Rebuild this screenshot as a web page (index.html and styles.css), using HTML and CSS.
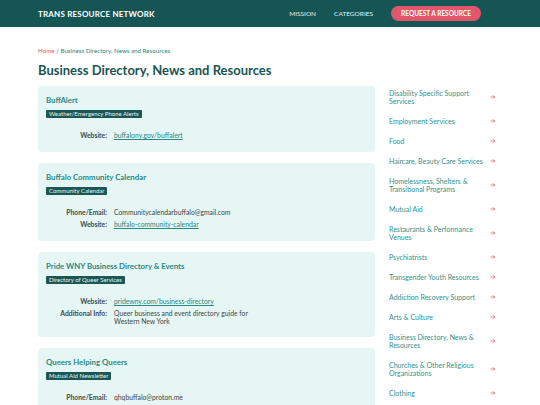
FILE: index.html
```html
<!DOCTYPE html>
<html lang="en">
<head>
    <meta charset="UTF-8">
    <meta name="viewport" content="width=device-width, initial-scale=1.0">
    <title>Business Directory, News and Resources - Trans Resource Network</title>
    <link rel="stylesheet" href="styles.css">
</head>
<body>
    <header class="topbar">
        <div class="wrap topbar-inner">
            <a class="brand" href="#">TRANS RESOURCE NETWORK</a>
            <nav class="nav">
                <a href="#">MISSION</a>
                <a href="#">CATEGORIES</a>
                <a class="nav-btn" href="#">REQUEST A RESOURCE</a>
            </nav>
        </div>
    </header>

    <div class="wrap page">
        <p class="crumbs"><a href="#">Home</a> / Business Directory, News and Resources</p>
        <h1 class="page-title">Business Directory, News and Resources</h1>

        <div class="layout">
            <main class="cards">
                <div class="card">
                    <h2 class="card-title">BuffAlert</h2>
                    <span class="badge">Weather/Emergency Phone Alerts</span>
                    <dl class="details">
                        <dt>Website:</dt>
                        <dd><a href="#">buffalony.gov/buffalert</a></dd>
                    </dl>
                </div>

                <div class="card">
                    <h2 class="card-title">Buffalo Community Calendar</h2>
                    <span class="badge">Community Calendar</span>
                    <dl class="details">
                        <dt>Phone/Email:</dt>
                        <dd>Communitycalendarbuffalo@gmail.com</dd>
                        <dt>Website:</dt>
                        <dd><a href="#">buffalo-community-calendar</a></dd>
                    </dl>
                </div>

                <div class="card">
                    <h2 class="card-title">Pride WNY Business Directory &amp; Events</h2>
                    <span class="badge">Directory of Queer Services</span>
                    <dl class="details">
                        <dt>Website:</dt>
                        <dd><a href="#">pridewny.com/business-directory</a></dd>
                        <dt>Additional Info:</dt>
                        <dd class="info">Queer business and event directory guide for Western New York</dd>
                    </dl>
                </div>

                <div class="card">
                    <h2 class="card-title">Queers Helping Queers</h2>
                    <span class="badge">Mutual Aid Newsletter</span>
                    <dl class="details">
                        <dt>Phone/Email:</dt>
                        <dd>qhqbuffalo@proton.me</dd>
                    </dl>
                </div>
            </main>

            <aside class="sidebar">
                <ul class="cat-list">
                    <li><a href="#"><span>Disability Specific Support Services</span><svg class="arrow" viewBox="0 0 10 10"><path d="M1 5h7M5 2l3 3-3 3"/></svg></a></li>
                    <li><a href="#"><span>Employment Services</span><svg class="arrow" viewBox="0 0 10 10"><path d="M1 5h7M5 2l3 3-3 3"/></svg></a></li>
                    <li><a href="#"><span>Food</span><svg class="arrow" viewBox="0 0 10 10"><path d="M1 5h7M5 2l3 3-3 3"/></svg></a></li>
                    <li><a href="#"><span>Haircare, Beauty Care Services</span><svg class="arrow" viewBox="0 0 10 10"><path d="M1 5h7M5 2l3 3-3 3"/></svg></a></li>
                    <li><a href="#"><span>Homelessness, Shelters &amp; Transitional Programs</span><svg class="arrow" viewBox="0 0 10 10"><path d="M1 5h7M5 2l3 3-3 3"/></svg></a></li>
                    <li><a href="#"><span>Mutual Aid</span><svg class="arrow" viewBox="0 0 10 10"><path d="M1 5h7M5 2l3 3-3 3"/></svg></a></li>
                    <li><a href="#"><span>Restaurants &amp; Performance Venues</span><svg class="arrow" viewBox="0 0 10 10"><path d="M1 5h7M5 2l3 3-3 3"/></svg></a></li>
                    <li><a href="#"><span>Psychiatrists</span><svg class="arrow" viewBox="0 0 10 10"><path d="M1 5h7M5 2l3 3-3 3"/></svg></a></li>
                    <li><a href="#"><span>Transgender Youth Resources</span><svg class="arrow" viewBox="0 0 10 10"><path d="M1 5h7M5 2l3 3-3 3"/></svg></a></li>
                    <li><a href="#"><span>Addiction Recovery Support</span><svg class="arrow" viewBox="0 0 10 10"><path d="M1 5h7M5 2l3 3-3 3"/></svg></a></li>
                    <li><a href="#"><span>Arts &amp; Culture</span><svg class="arrow" viewBox="0 0 10 10"><path d="M1 5h7M5 2l3 3-3 3"/></svg></a></li>
                    <li><a href="#"><span>Business Directory, News &amp; Resources</span><svg class="arrow" viewBox="0 0 10 10"><path d="M1 5h7M5 2l3 3-3 3"/></svg></a></li>
                    <li><a href="#"><span>Churches &amp; Other Religious Organizations</span><svg class="arrow" viewBox="0 0 10 10"><path d="M1 5h7M5 2l3 3-3 3"/></svg></a></li>
                    <li><a href="#"><span>Clothing</span><svg class="arrow" viewBox="0 0 10 10"><path d="M1 5h7M5 2l3 3-3 3"/></svg></a></li>
                </ul>
            </aside>
        </div>
    </div>
</body>
</html>
```

FILE: styles.css
```css
body {
    margin: 0;
    font-family: Lato, "Open Sans", sans-serif;
    color: #3b4444;
    background-color: #fff;
}
a {
    color: inherit;
    text-decoration: none;
}
.wrap {
    width: 464px;
    margin: 0 0 0 38px;
}

/* top bar */
.topbar {
    height: 27px;
    background-color: #155655;
}
.topbar-inner {
    display: flex;
    align-items: center;
    justify-content: space-between;
    height: 100%;
}
.brand {
    color: #fff;
    font-size: 8px;
    font-weight: 700;
    letter-spacing: 0.2px;
}
.nav {
    display: flex;
    align-items: center;
    gap: 18px;
    margin-right: 21px;
    font-size: 6.5px;
    color: #e4f1f0;
}
.nav-btn {
    padding: 0 10px;
    height: 15px;
    line-height: 15px;
    width: 70px;
    text-align: center;
    border-radius: 8px;
    background-color: #e2566b;
    color: #fff;
    font-weight: 700;
}

/* heading */
.page {
    padding-top: 20px;
}
.crumbs {
    margin: 0;
    font-size: 6.2px;
    line-height: 8px;
    color: #2b8883;
}
.crumbs a {
    color: #e2566b;
}
.page-title {
    margin: 7px 0 0;
    font-size: 13px;
    line-height: 16px;
    font-weight: 700;
    color: #1a5553;
}

/* main layout */
.layout {
    display: flex;
    align-items: flex-start;
    gap: 14px;
    margin-top: 8px;
}
.cards {
    display: flex;
    flex-direction: column;
    gap: 11px;
    width: 337px;
    flex-shrink: 0;
}
.card {
    padding: 9px 8px 12px;
    border-radius: 4px;
    background-color: #e5f6f5;
}
.card-title {
    margin: 0;
    font-size: 7.8px;
    line-height: 11px;
    font-weight: 700;
    color: #2a8983;
}
.badge {
    display: block;
    width: fit-content;
    margin-top: 4px;
    padding: 0 3px;
    height: 8px;
    line-height: 8px;
    font-size: 6px;
    border-radius: 1px;
    background-color: #1b5755;
    color: #e6f4f3;
}
.details {
    display: grid;
    grid-template-columns: 61px 140px;
    column-gap: 7px;
    row-gap: 3px;
    margin: 13px 0 0;
    font-size: 6.8px;
    line-height: 9px;
}
.details dt {
    text-align: right;
    font-weight: 700;
    color: #434b4b;
}
.details dd {
    margin: 0;
    color: #3e4646;
    white-space: nowrap;
}
.details dd.info {
    white-space: normal;
    line-height: 8px;
}
.details dd a {
    color: #2a8983;
    text-decoration: underline;
}

/* sidebar */
.sidebar {
    width: 108px;
    margin-top: -3px;
}
.cat-list {
    list-style: none;
    margin: 0;
    padding: 0;
}
.cat-list a {
    display: flex;
    align-items: center;
    justify-content: space-between;
    padding: 6px 0;
    font-size: 7px;
    line-height: 8px;
    color: #32928c;
}
.cat-list span {
    width: 96px;
}
.arrow {
    width: 6px;
    height: 6px;
    margin-right: 1px;
    fill: none;
    stroke: #e2566b;
    stroke-width: 1.2;
}
```
